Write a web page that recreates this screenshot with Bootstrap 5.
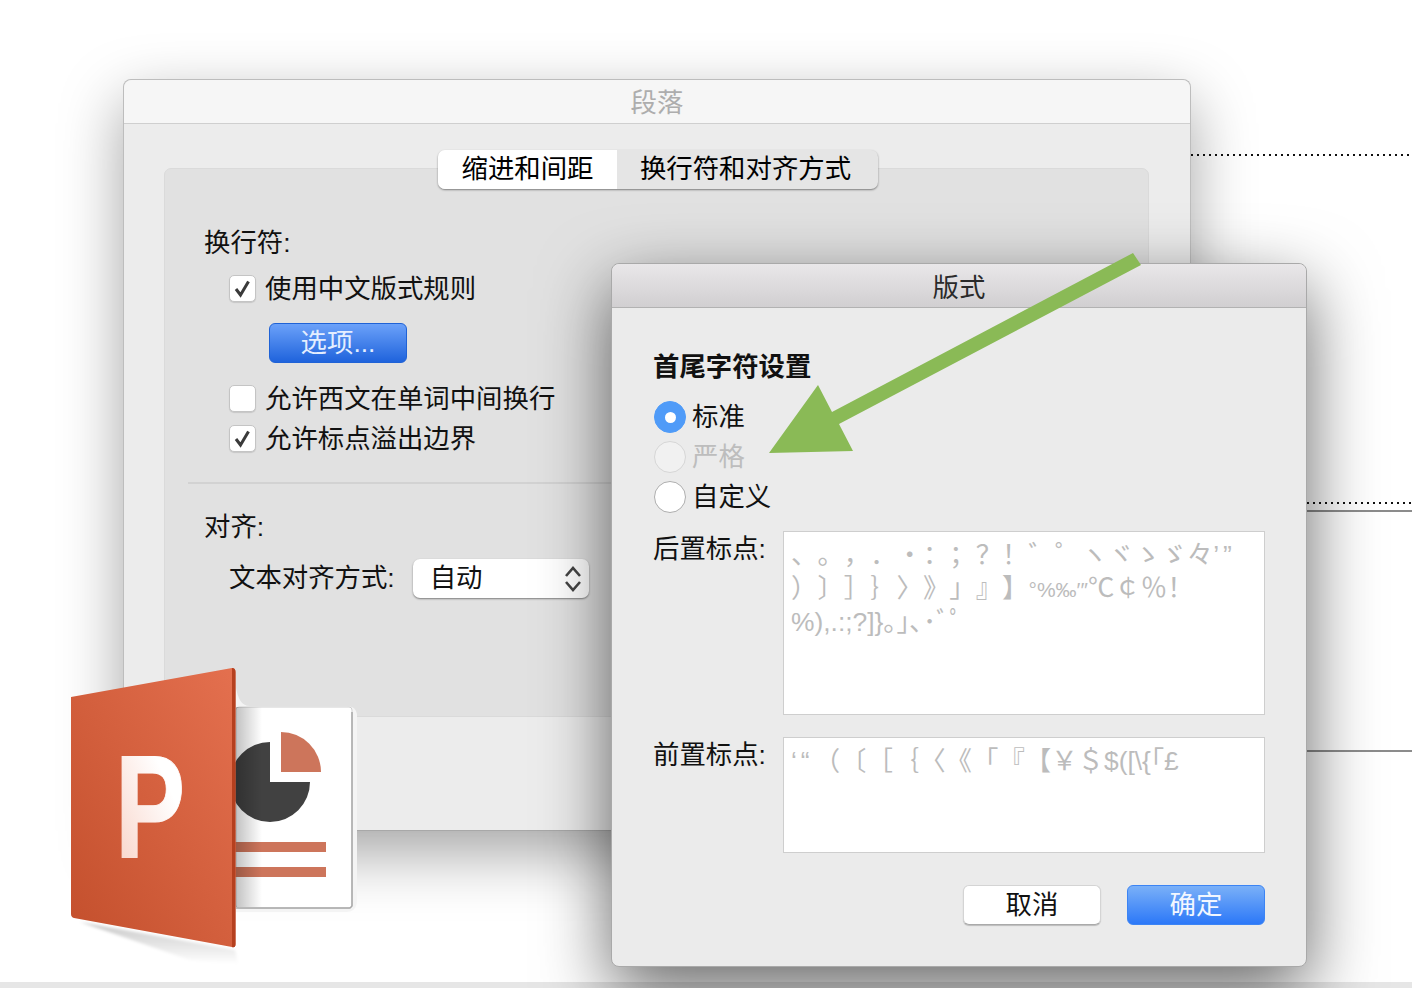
<!DOCTYPE html>
<html lang="zh">
<head>
<meta charset="utf-8">
<title>段落</title>
<link href="https://cdn.jsdelivr.net/npm/bootstrap@5.3.0/dist/css/bootstrap.min.css" rel="stylesheet">
<style>
html,body{margin:0;height:100%;background:#fff}
body{font-family:"Liberation Sans","Noto Sans CJK SC",sans-serif;font-size:26.4px;color:#111;overflow:hidden;text-spacing-trim:space-all}
.stage{position:relative;width:1412px;height:988px;overflow:hidden;background:#fff}
.floor{position:absolute;left:0;right:0;bottom:0;height:6px;background:#e6e6e6}
.dots{position:absolute;height:2px;right:0;background:repeating-linear-gradient(90deg,#111 0 2px,transparent 2px 6px)}
.rule{position:absolute;height:2px;right:0;background:#8c8c8c}
.win{position:absolute;background:#ececec;border:1px solid #bdbdbd;border-radius:8px;display:flex;flex-direction:column}
.win-a{left:123px;top:79px;width:1068px;height:752px;box-shadow:0 22px 62px rgba(0,0,0,.36);border-bottom-color:#a8a8a8}
.win-b{left:611px;top:263px;width:696px;height:704px;background:#ebebeb;border-color:#a9a9a9;box-shadow:0 24px 70px rgba(0,0,0,.6)}
.bar-a{height:44px;line-height:47px;text-align:center;color:#adadad;background:#f6f6f6;border-bottom:1px solid #cfcfcf;border-radius:8px 8px 0 0;flex:none}
.bar-b{height:44px;line-height:48px;text-align:center;color:#2a2a2a;background:linear-gradient(#e9e7e9,#d1cfd1);border-bottom:1px solid #b2b2b2;border-radius:8px 8px 0 0;flex:none}
.grp{margin:44px 41px 0 40px;height:549px;background:#e1e1e1;border:1px solid #dadada;border-radius:7px}
.seg{margin-top:-19px;height:39px;width:440px;margin-left:273px;border-radius:7px;box-shadow:0 1px 2px rgba(0,0,0,.45);overflow:hidden;background:#e5e5e5}
.seg-on{width:179px;background:#fff;color:#000;text-align:center;line-height:38px}
.seg-off{flex:1;text-align:center;line-height:38px;color:#000;padding-right:4px}
.rowh{height:36px;line-height:36px;white-space:nowrap}
.ind1{padding-left:39px}
.ind2{padding-left:64px}
.m36{margin-top:36px}.m10{margin-top:10px}.m18{margin-top:18px}.m4{margin-top:4px}.m14{margin-top:14px}
.box{width:27px;height:27px;flex:none;background:#fff;border:1px solid #c4c4c4;border-radius:5px;margin-right:9px;margin-top:-2px;display:flex;align-items:center;justify-content:center;box-shadow:0 1px 1px rgba(0,0,0,.12)}
.opt-btn{width:138px;height:40px;margin-left:104px;margin-top:16px;padding:0;font-size:26.4px;line-height:38px;color:#e4eeff;background:linear-gradient(#6ba1f9,#1f63dc);border:1px solid #1f62d6;border-radius:6px}
.sep{height:2px;background:#d2d2d2;margin:25px 0 0 23px;width:936px}
.m25{margin-top:25px}
.sel-row{height:39px;line-height:39px}
.sel{width:176px;height:39px;margin-left:18px;background:#fff;border-radius:7px;box-shadow:0 1px 2px rgba(0,0,0,.45);padding-left:17px;padding-right:7px;line-height:39px}
.pad{padding:0 41px 0 41px}
.hd{font-weight:700;color:#111;margin-top:41px;height:36px;line-height:36px}
.rad-list{margin-top:12px}
.rad-row{height:40px;line-height:40px;white-space:nowrap}
.rad{width:32px;height:32px;border-radius:50%;flex:none;margin-right:6px;margin-left:1px;display:flex;align-items:center;justify-content:center;background:#fff;border:1px solid #aeaeae}
.rad-on{background:#4f9bf8;border-color:#4f9bf8}
.rad-on i{display:block;width:11px;height:11px;border-radius:50%;background:#fff}
.rad-dis{background:#f1f1f1;border-color:#d6d6d6}
.mute{color:#bdbdbd}
.fld-l{width:130px;flex:none;line-height:36px}
.fld{flex:1;background:#fff;border:1px solid #cecece;padding:7px 0 0 7px;font-family:"Liberation Sans","Noto Sans CJK JP",sans-serif;font-size:26.4px;line-height:33px;color:#bcbcbc;white-space:pre;overflow:hidden}
.quo{letter-spacing:4px}
.nar{font-size:21px}
.h184{height:184px;margin-top:14px}
.h116{height:116px;margin-top:22px}
.ml14{margin-top:14px}.ml22{margin-top:22px}
.acts{margin-top:32px;gap:26px}
.b-cancel,.b-ok{width:138px;height:40px;padding:0;font-size:26.4px;line-height:38px;border-radius:6px}
.b-cancel{background:#fff;color:#111;border:1px solid #d4d4d4;border-bottom-color:#aaa;box-shadow:0 1px 1px rgba(0,0,0,.2)}
.b-ok{background:linear-gradient(#7ab0f8,#2c78f8);color:#f2f7ff;border:1px solid #3c84f4}
.over{position:absolute;left:0;top:0;pointer-events:none}
.pglyph{stroke:url(#pfill);stroke-width:1px}
</style>
</head>
<body>
<div class="stage">
  <div class="floor"></div>
  <div class="dots" style="left:1191px;top:154px"></div>
  <div class="dots" style="left:1307px;top:502px"></div>
  <div class="rule" style="left:1307px;top:510px"></div>
  <div class="rule" style="left:1307px;top:750px"></div>

  <div class="win win-a">
    <div class="bar-a">段落</div>
    <div class="grp">
      <div class="seg d-flex">
        <div class="seg-on">缩进和间距</div>
        <div class="seg-off">换行符和对齐方式</div>
      </div>
      <div class="rowh ind1 m36">换行符:</div>
      <div class="rowh ind2 m10 d-flex align-items-center">
        <span class="box"><svg width="19" height="19" viewBox="0 0 19 19"><path d="M3 10 7.500 16 15.500 2.500" fill="none" stroke="#3a3a3a" stroke-width="3"/></svg></span>使用中文版式规则
      </div>
      <button type="button" class="btn opt-btn d-block">选项...</button>
      <div class="rowh ind2 m18 d-flex align-items-center">
        <span class="box"></span>允许西文在单词中间换行
      </div>
      <div class="rowh ind2 m4 d-flex align-items-center">
        <span class="box"><svg width="19" height="19" viewBox="0 0 19 19"><path d="M3 10 7.500 16 15.500 2.500" fill="none" stroke="#3a3a3a" stroke-width="3"/></svg></span>允许标点溢出边界
      </div>
      <div class="sep"></div>
      <div class="rowh ind1 m25">对齐:</div>
      <div class="ind2 d-flex align-items-center sel-row m14">
        文本对齐方式:
        <div class="sel d-flex justify-content-between align-items-center">
          <span>自动</span>
          <svg width="18" height="28" viewBox="0 0 18 28"><path d="M2 11 9 3l7 8M2 17l7 8 7-8" fill="none" stroke="#444" stroke-width="2.600"/></svg>
        </div>
      </div>
    </div>
  </div>

  <svg class="over" width="1412" height="988" viewBox="0 0 1412 988">
    <defs>
      <linearGradient id="door" x1="0" y1="1" x2="1" y2="0">
        <stop offset="0" stop-color="#c34f2c"/><stop offset="1" stop-color="#e4704f"/>
      </linearGradient>
      <linearGradient id="pfill" x1="0" y1="1" x2="1" y2="0">
        <stop offset="0" stop-color="#f8cfc2"/><stop offset=".7" stop-color="#fff"/>
      </linearGradient>
      <linearGradient id="cast" x1="0" x2="1">
        <stop offset="0" stop-color="#000" stop-opacity=".24"/><stop offset="1" stop-color="#000" stop-opacity="0"/>
      </linearGradient>
      <linearGradient id="under" x1="0" x2="0" y1="0" y2="1">
        <stop offset="0" stop-color="#000" stop-opacity=".22"/><stop offset="1" stop-color="#000" stop-opacity="0"/>
      </linearGradient>
      <filter id="soft" x="-20%" y="-20%" width="140%" height="140%"><feGaussianBlur stdDeviation="1.500"/></filter>
    </defs>
    <path d="M80 922 235 950 238 964 190 960Z" fill="url(#under)" filter="url(#soft)"/>
    <path d="M236 688 C238 698 241 706 250 706H346Q357 706 357 716V900Q357 912 346 912H236Z" fill="#f4f4f4"/>
    <rect x="236" y="707" width="116" height="201" rx="3" fill="#fff" stroke="#d0d0d0" stroke-width="1"/>
    <path d="M352 712v194l-2 2H236" fill="none" stroke="#a8a8a8" stroke-width="1.500"/>
    <path d="M270 742V782H310A40 40 0 1 1 270 742Z" fill="#414141"/>
    <path d="M281 732A40 40 0 0 1 321 772H281Z" fill="#cd755b"/>
    <rect x="232" y="842" width="94" height="10" fill="#cd755b"/>
    <rect x="232" y="867" width="94" height="10" fill="#cd755b"/>
    <rect x="236" y="707" width="26" height="200" fill="url(#cast)"/>
    <path d="M71 697 232 668Q235.500 668 235.500 672V944Q235.500 948 232 947L74 918Q71 917 71 914Z" fill="url(#door)"/>
    <path d="M232 668Q235.500 668 235.500 672V944Q235.500 948 232 947Z" fill="#b5401f"/>
    <text class="pglyph" transform="translate(115 858) scale(.72 1)" font-family="Liberation Sans" font-weight="700" font-size="146" fill="url(#pfill)">P</text>
  </svg>

  <div class="win win-b">
    <div class="bar-b">版式</div>
    <div class="pad">
      <div class="hd">首尾字符设置</div>
      <div class="rad-list">
        <div class="rad-row d-flex align-items-center"><span class="rad rad-on"><i></i></span>标准</div>
        <div class="rad-row d-flex align-items-center mute"><span class="rad rad-dis"></span>严格</div>
        <div class="rad-row d-flex align-items-center"><span class="rad"></span>自定义</div>
      </div>
      <div class="d-flex">
        <div class="fld-l ml14">后置标点:</div>
        <div class="fld h184">、。，．・：；？！゛゜ヽヾゝゞ々<span class="quo">’”</span>
）〕］｝〉》」』】<span class="nar">°%‰′″</span>℃￠％！
%),.:;?]}｡｣､･ﾞﾟ</div>
      </div>
      <div class="d-flex">
        <div class="fld-l ml22">前置标点:</div>
        <div class="fld h116"><span class="quo">‘“</span>（〔［｛〈《「『【￥＄$([\{｢£</div>
      </div>
      <div class="d-flex justify-content-end acts">
        <button type="button" class="btn b-cancel">取消</button>
        <button type="button" class="btn b-ok">确定</button>
      </div>
    </div>
  </div>

  <svg class="over" width="1412" height="988" viewBox="0 0 1412 988">
    <polygon points="1133,253 1141,265 839,424 853,451 769,453 818,385 832,412" fill="#8aba56"/>
  </svg>
</div>
<script src="https://cdn.jsdelivr.net/npm/bootstrap@5.3.0/dist/js/bootstrap.bundle.min.js"></script>
</body>
</html>
